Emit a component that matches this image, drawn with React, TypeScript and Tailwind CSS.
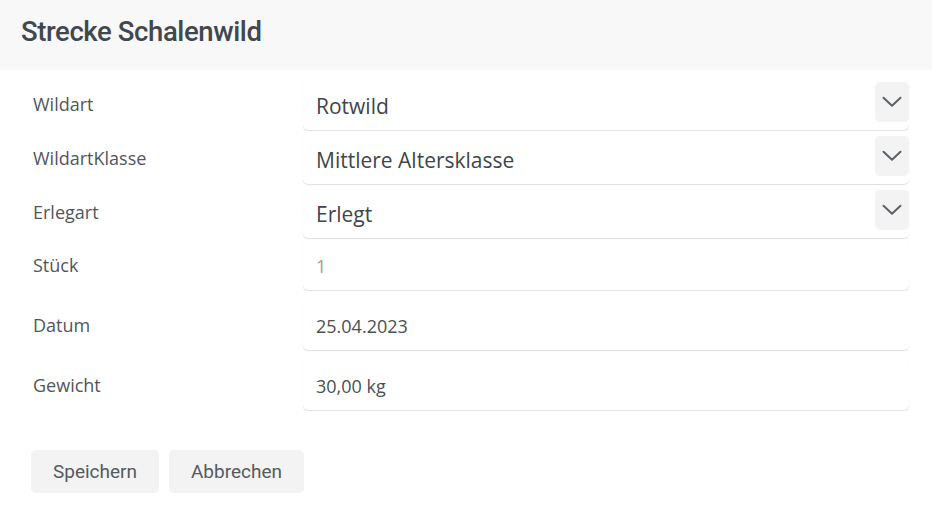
import React from 'react';

const selects = [
  { label: 'Wildart', value: 'Rotwild' },
  { label: 'WildartKlasse', value: 'Mittlere Altersklasse' },
  { label: 'Erlegart', value: 'Erlegt' },
];

const inputs = [
  { label: 'Stück', value: '1', muted: true },
  { label: 'Datum', value: '25.04.2023' },
  { label: 'Gewicht', value: '30,00 kg' },
];

const Chevron = () => (
  <svg width="20" height="12" viewBox="0 0 20 12" fill="none">
    <path d="M1.5 1.8 L10 9.8 L18.5 1.8" stroke="#5b6168" strokeWidth="2" strokeLinecap="round" strokeLinejoin="round" />
  </svg>
);

const field = 'rounded-[5px] bg-white shadow-[0_1px_1px_rgba(0,0,0,0.13),0_0_1px_rgba(0,0,0,0.03)]';

export default function App() {
  return (
    <div className="w-[932px] h-[510px] bg-white" style={{ fontFamily: '"Open Sans", "Noto Sans", sans-serif' }}>
      <header className="h-[70px] bg-[#f8f8f8] flex items-center pl-[21px] pb-[6px]">
        <h1 className="text-[27.5px] font-medium text-[#41474e] tracking-[-0.4px]" style={{ fontFamily: 'Roboto, sans-serif' }}>
          Strecke Schalenwild
        </h1>
      </header>

      <div className="pt-[10px] pl-[31px] pr-[23px]">
        <div className="flex flex-col gap-[4px]">
          {selects.map((s) => (
            <div key={s.label} className="flex items-center h-[50px]">
              <div className="w-[272px] pl-[2px] text-[18px] text-[#50565d] -mt-[2px]">{s.label}</div>
              <div className={`flex-1 h-full flex items-center justify-between pl-[13px] ${field}`}>
                <span className="text-[21px] text-[#3f454b] pt-[3px]">{s.value}</span>
                <div className="w-[34px] h-[40px] -mt-[6px] bg-[#f3f3f3] rounded-[5px] flex items-center justify-center">
                  <Chevron />
                </div>
              </div>
            </div>
          ))}
        </div>

        <div className="flex flex-col gap-[10px] mt-[2px]">
          {inputs.map((f) => (
            <div key={f.label} className="flex items-center h-[50px]">
              <div className="w-[272px] pl-[2px] text-[18px] text-[#50565d] mt-[1px]">{f.label}</div>
              <div className={`flex-1 h-full flex items-center pl-[13px] pt-[3px] ${field}`}>
                <span className={`text-[18px] ${f.muted ? 'text-[#9aa0a6]' : 'text-[#4a5056]'}`}>{f.value}</span>
              </div>
            </div>
          ))}
        </div>

        <div className="flex gap-[10px] mt-[40px]" style={{ fontFamily: 'Roboto, sans-serif' }}>
          <button className="h-[43px] w-[128px] pt-[2px] rounded-[5px] bg-[#f3f3f3] text-[19px] text-[#555a60]">Speichern</button>
          <button className="h-[43px] w-[135px] pt-[2px] rounded-[5px] bg-[#f3f3f3] text-[19px] text-[#555a60]">Abbrechen</button>
        </div>
      </div>
    </div>
  );
}
